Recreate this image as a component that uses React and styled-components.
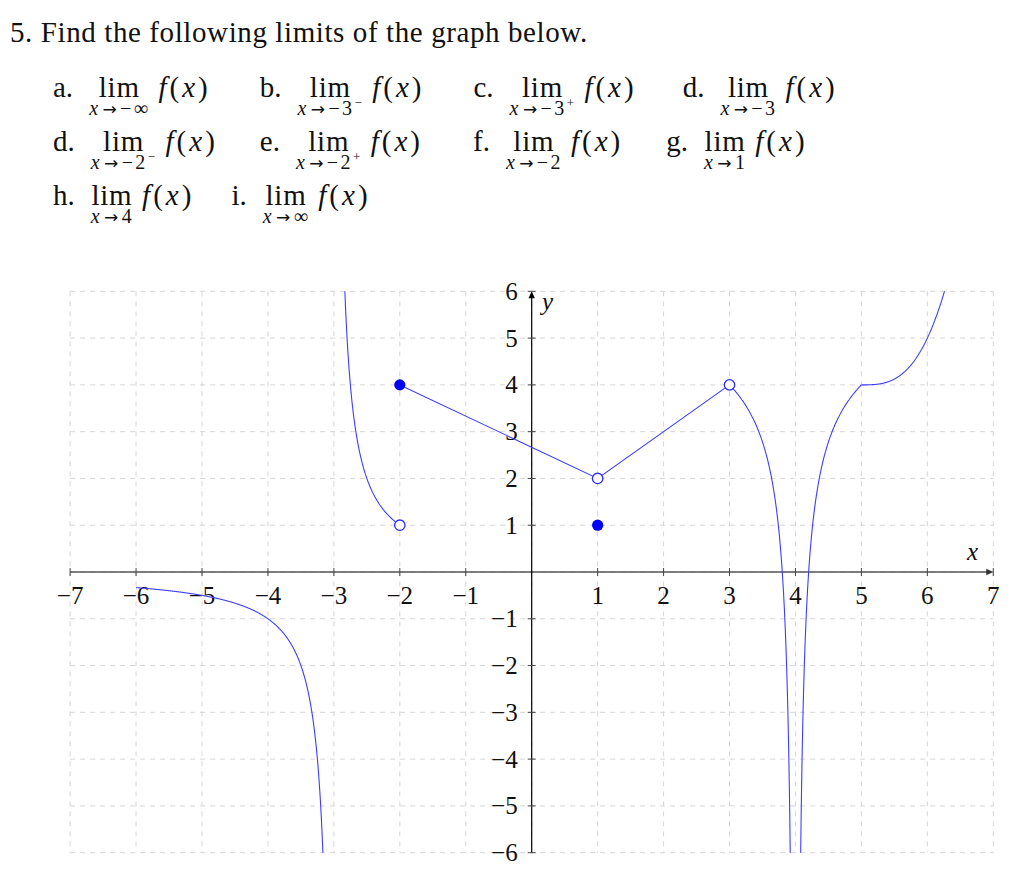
import React from 'react'
import styled, { createGlobalStyle } from 'styled-components'

const serif = `"Liberation Serif", "Times New Roman", serif`

const GlobalStyle = createGlobalStyle`
  html, body {
    margin: 0;
    padding: 0;
    background: #fff;
  }
  body {
    font-family: ${serif};
    color: #111;
  }
`

const rows = [
  [
    { label: 'a.', to: '−∞', gap: 0 },
    { label: 'b.', to: '−3', sup: '−', gap: 51 },
    { label: 'c.', to: '−3', sup: '+', gap: 51 },
    { label: 'd.', to: '−3', gap: 48 },
  ],
  [
    { label: 'd.', to: '−2', sup: '−', gap: 0 },
    { label: 'e.', to: '−2', sup: '+', gap: 44 },
    { label: 'f.', to: '−2', gap: 52 },
    { label: 'g.', to: '1', gap: 45 },
  ],
  [
    { label: 'h.', to: '4', gap: 0 },
    { label: 'i.', to: '∞', gap: 39 },
  ],
]

// graph scale (svg coords, svg top sits at page y=260)
const ox = 531.7
const oy = 310
const ux = 65.94
const uy = 46.78
const X = (x) => ox + ux * x
const Y = (y) => oy - uy * y

const plot = (f, a, b, n = 700) => {
  let d = ''
  for (let i = 0; i <= n; i++) {
    const x = a + ((b - a) * i) / n
    let y = f(x)
    if (y > 9) y = 9
    if (y < -9) y = -9
    d += (i ? 'L' : 'M') + X(x).toFixed(2) + ',' + Y(y).toFixed(2)
  }
  return d
}

const recip = (x) => 1 / (x + 3)
const well = (d) => 4 + 0.754 * Math.log(d) - 0.697 * (1 / d - 1)

const curves = [
  plot(recip, -6, -3 - 1 / 6.4),
  plot(recip, -3 + 1 / 6.4, -2),
  plot((x) => well(4 - x), 3, 3.945),
  plot((x) => well(x - 4), 4.055, 5),
  plot((x) => 4 + Math.pow(x - 5, 3), 5, 6.35),
  `M${X(-2)},${Y(4)}L${X(1)},${Y(2)}L${X(3)},${Y(4)}`,
]

const xs = [-7, -6, -5, -4, -3, -2, -1, 0, 1, 2, 3, 4, 5, 6, 7]
const ys = [-6, -5, -4, -3, -2, -1, 0, 1, 2, 3, 4, 5, 6]
const num = (n) => (n < 0 ? '−' + Math.abs(n) : String(n))

const Page = styled.div`
  padding: 12px 0 0 10px;
  font-family: ${serif};
`

const Heading = styled.div`
  font-size: 29px;
  line-height: 40px;
  letter-spacing: 0.6px;
`

const List = styled.div`
  margin: 21px 0 0 43px;
  font-size: 29px;
`

const Row = styled.div`
  display: flex;
  align-items: flex-start;
  height: 54px;
`

const Item = styled.div`
  display: flex;
  align-items: flex-start;
  margin-left: ${(p) => p.$gap}px;
`

const Label = styled.span`
  line-height: 28px;
  margin-right: 15px;
`

const LimOp = styled.div`
  display: flex;
  flex-direction: column;
  align-items: center;
`

const Lim = styled.span`
  line-height: 28px;
  letter-spacing: 0.8px;
`

const Sub = styled.span`
  font-size: 20px;
  line-height: 12px;
  margin-top: 1px;
  letter-spacing: 2.4px;
  white-space: nowrap;
  sup {
    font-size: 13px;
    line-height: 0;
    vertical-align: 8px;
    margin-left: 0;
  }
`

const Arrow = styled.span`
  display: inline-block;
  font-family: "DejaVu Sans", sans-serif;
  font-size: 17px;
  margin: 0 1px;
`

const Fx = styled.span`
  line-height: 28px;
  margin-left: 6px;
  letter-spacing: 1px;
  white-space: nowrap;
`

const Var = styled.i`
  font-style: italic;
  padding: 0 ${(p) => p.$pad ?? 2}px;
`

const Graph = styled.svg`
  display: block;
  margin: 27px 0 0 -10px;
  font-family: ${serif};
`

const Limit = ({ label, to, sup, gap }) => (
  <Item $gap={gap}>
    <Label>{label}</Label>
    <LimOp>
      <Lim>lim</Lim>
      <Sub>
        <Var $pad={1}>x</Var>
        <Arrow>→</Arrow>
        {to}
        {sup && <sup>{sup}</sup>}
      </Sub>
    </LimOp>
    <Fx>
      <Var>f</Var>(<Var>x</Var>)
    </Fx>
  </Item>
)

export default function App() {
  return (
    <>
      <GlobalStyle />
      <Page>
        <Heading>5. Find the following limits of the graph below.</Heading>
        <List>
          {rows.map((r, i) => (
            <Row key={i}>
              {r.map((it, j) => (
                <Limit key={j} {...it} />
              ))}
            </Row>
          ))}
        </List>
        <Graph width="1020" height="611" viewBox="0 0 1020 611">
          <defs>
            <clipPath id="plotArea">
              <rect x={X(-7)} y={Y(6)} width={X(7) - X(-7)} height={Y(-6) - Y(6)} />
            </clipPath>
          </defs>

          <g stroke="#d6d6d6" strokeWidth="1" strokeDasharray="5 5">
            {xs.map((x) => (
              <line key={'gx' + x} x1={X(x)} x2={X(x)} y1={Y(6)} y2={Y(-6)} />
            ))}
            {ys.map((y) => (
              <line key={'gy' + y} x1={X(-7)} x2={X(7)} y1={Y(y)} y2={Y(y)} />
            ))}
          </g>

          <line x1={X(-7)} x2={X(7) - 3} y1={Y(0)} y2={Y(0)} stroke="#555" strokeWidth="1.5" />
          <path d={`M${X(7) - 7},${Y(0) - 3.2}L${X(7)},${Y(0)}L${X(7) - 7},${Y(0) + 3.2}Z`} fill="#333" />
          <line x1={X(0)} x2={X(0)} y1={Y(-6)} y2={Y(6) + 3} stroke="#000" strokeWidth="1.2" />
          <path d={`M${X(0) - 3.2},${Y(6) + 7}L${X(0)},${Y(6)}L${X(0) + 3.2},${Y(6) + 7}Z`} fill="#000" />

          <g stroke="#444" strokeWidth="1">
            {xs.filter((x) => x !== 0).map((x) => (
              <line key={'tx' + x} x1={X(x)} x2={X(x)} y1={Y(0) - 4} y2={Y(0) + 4} />
            ))}
            {ys.filter((y) => y !== 0).map((y) => (
              <line key={'ty' + y} x1={X(0) - 4} x2={X(0) + 4} y1={Y(y)} y2={Y(y)} />
            ))}
          </g>

          <g fontSize="25" fill="#111">
            {xs.filter((x) => x !== 0).map((x) => (
              <text key={'lx' + x} x={X(x)} y={Y(0) + 32} textAnchor="middle">
                {num(x)}
              </text>
            ))}
            {ys.filter((y) => y !== 0).map((y) => (
              <text key={'ly' + y} x={X(0) - 14} y={Y(y) + 8.5} textAnchor="end">
                {num(y)}
              </text>
            ))}
            <text x="542" y="48" fontStyle="italic">y</text>
            <text x="967" y="298" fontStyle="italic">x</text>
          </g>

          <g clipPath="url(#plotArea)" fill="none" stroke="#3d3dff" strokeWidth="1.1">
            {curves.map((d, i) => (
              <path key={i} d={d} />
            ))}
          </g>

          <circle cx={X(-2)} cy={Y(4)} r="5.6" fill="#0000ff" />
          <circle cx={X(1)} cy={Y(1)} r="5.6" fill="#0000ff" />
          <g fill="#fff" stroke="#2b2bff" strokeWidth="1.3">
            <circle cx={X(-2)} cy={Y(1)} r="5.2" />
            <circle cx={X(1)} cy={Y(2)} r="5.2" />
            <circle cx={X(3)} cy={Y(4)} r="5.2" />
          </g>
        </Graph>
      </Page>
    </>
  )
}
